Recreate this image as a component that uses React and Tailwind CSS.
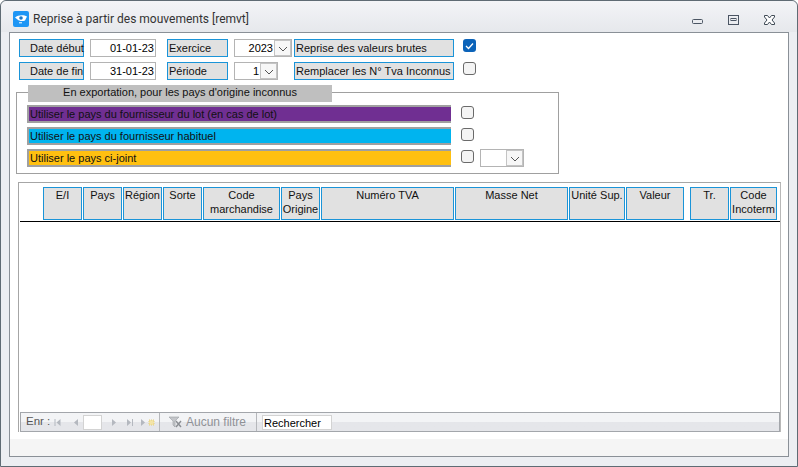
const font = { fontFamily: '"Liberation Sans", Arial, sans-serif' };

function Label({ className = "", children }) {
  return (
    <div className={"h-[18px] border border-[#1a94d8] bg-[#e1e1e1] text-[11px] leading-[16px] text-[#111] whitespace-nowrap " + className}>
      {children}
    </div>
  );
}

function Field({ className = "", children }) {
  return (
    <div className={"h-[18px] border border-[#b4b4b4] bg-white pr-[1px] text-right text-[11px] leading-[16px] text-black " + className}>
      {children}
    </div>
  );
}

function Arrow() {
  return (
    <div className="flex h-full w-[17px] shrink-0 items-center justify-center border border-[#c4c4c4] bg-[#f7f7f7]">
      <svg width="10" height="6" viewBox="0 0 10 6" className="mt-[2px]"><path d="M1 1l4 4 4-4" fill="none" stroke="#555" strokeWidth="1" /></svg>
    </div>
  );
}

function Combo({ className = "", value }) {
  return (
    <div className={"flex h-[18px] border border-[#b4b4b4] bg-white text-[11px] leading-[16px] text-black " + className}>
      <div className="flex-1 pr-[1px] text-right">{value}</div>
      <Arrow />
    </div>
  );
}

function Check({ checked, className = "" }) {
  return checked ? (
    <div className={"flex h-[13px] w-[13px] items-center justify-center rounded-[3px] bg-[#0b63b9] " + className}>
      <svg width="9" height="8" viewBox="0 0 9 8"><path d="M1 4l2.500 2.500L8 1.500" fill="none" stroke="#fff" strokeWidth="1.300" /></svg>
    </div>
  ) : (
    <div className={"h-[13px] w-[13px] rounded-[3px] border border-[#6a6a6a] bg-[#f4f4f4] " + className} />
  );
}

function ColorRow({ bg, children }) {
  return (
    <div className="h-[18px] w-[424px] shrink-0 border-t-2 border-l-2 border-b-2 border-[#a0a0a0]">
      <div className={"h-[14px] truncate pl-[1px] text-[11px] leading-[14px] text-[#111] " + bg}>{children}</div>
    </div>
  );
}

const columns = [
  { w: "w-[39px]", ml: "ml-0", t: "E/I" },
  { w: "w-[39px]", ml: "ml-[1px]", t: "Pays" },
  { w: "w-[39px]", ml: "ml-[1px]", t: "Région" },
  { w: "w-[39px]", ml: "ml-[1px]", t: "Sorte" },
  { w: "w-[77px]", ml: "ml-[1px]", t: "Code marchandise" },
  { w: "w-[39px]", ml: "ml-[1px]", t: "Pays Origine" },
  { w: "w-[133px]", ml: "ml-[1px]", t: "Numéro TVA" },
  { w: "w-[113px]", ml: "ml-[1px]", t: "Masse Net" },
  { w: "w-[56px]", ml: "ml-[1px]", t: "Unité Sup." },
  { w: "w-[58px]", ml: "ml-[1px]", t: "Valeur" },
  { w: "w-[39px]", ml: "ml-[6px]", t: "Tr." },
  { w: "w-[47px]", ml: "ml-[1px]", t: "Code Incoterm" },
];

function NavIcon({ d, className = "" }) {
  return (
    <svg width="8" height="9" viewBox="0 0 8 9" className={"shrink-0 " + className}><path d={d} fill="#b4b8bf" /></svg>
  );
}

export default function App() {
  return (
    <div style={font} className="h-[467px] w-[798px] overflow-hidden bg-white">
      <div className="flex h-[467px] w-[798px] flex-col rounded-t-[6px] border border-[#5f6b74] bg-[#eceef2] px-[8px] pb-[9px]">
        {/* title bar */}
        <div className="-mx-[8px] flex h-[31px] shrink-0 items-center rounded-t-[6px] bg-gradient-to-b from-[#f3f4f7] to-[#e6e8ec] px-[12px] pb-[1px]">
          <div className="mt-[6px] flex h-[16px] w-[16px] items-center justify-center rounded-[2px] bg-[#1e96f5]">
            <svg width="14" height="10" viewBox="0 0 14 10">
              <path d="M1 3.500C4 0.800 10 0.800 13 2.500L11 6.500C8 7.500 5 7 3.500 5.500z" fill="#fff" />
              <circle cx="7" cy="4" r="1.800" fill="#1b78c8" />
              <path d="M5 8.800h3" stroke="#fff" strokeWidth="1" />
            </svg>
          </div>
          <div style={{ fontFamily: 'Roboto, sans-serif' }} className="ml-[4px] mt-[6px] text-[12px] leading-[16px] text-[#333]">Reprise à partir des mouvements [remvt]</div>
          <div className="ml-auto mr-[10px] mt-[7px] flex items-start gap-[25px]">
            <svg width="11" height="5" viewBox="0 0 11 5" className="mt-[4px]"><rect x="0.500" y="0.500" width="10" height="4" rx="1" fill="none" stroke="#4b5563" /></svg>
            <svg width="11" height="10" viewBox="0 0 11 10"><rect x="0.500" y="0.500" width="10" height="9" fill="none" stroke="#4b5563" /><rect x="3" y="3.500" width="5" height="2" fill="none" stroke="#4b5563" /></svg>
            <svg width="11" height="10" viewBox="0 0 11 10"><path d="M0.500 0.500h3l2 2.500 2-2.500h3v1.500L8 5l2.500 3v1.500h-3l-2-2.500-2 2.500h-3V8L3 5 0.500 2z" fill="#fff" stroke="#3f4a55" /></svg>
          </div>
        </div>

        {/* content */}
        <div className="flex min-h-0 flex-1 flex-col border border-[#8a9097] bg-white">
          <div className="flex h-[406px] flex-col px-[9px] pt-[6px]">
            <div className="flex items-start">
              <Label className="w-[65px] pl-[10px]">Date début</Label>
              <Field className="ml-[6px] w-[66px]">01-01-23</Field>
              <Label className="ml-[11px] w-[61px] pl-[1px]">Exercice</Label>
              <Combo className="ml-[6px] w-[58px]" value="2023" />
              <Label className="ml-[2px] w-[160px] pl-[1px]">Reprise des valeurs brutes</Label>
              <Check checked className="ml-[9px]" />
            </div>
            <div className="mt-[5px] flex items-start">
              <Label className="w-[65px] pl-[10px]">Date de fin</Label>
              <Field className="ml-[6px] w-[66px]">31-01-23</Field>
              <Label className="ml-[11px] w-[61px] pl-[1px]">Période</Label>
              <Combo className="ml-[6px] w-[44px]" value="1" />
              <Label className="ml-[16px] w-[160px] pl-[1px]">Remplacer les N° Tva Inconnus</Label>
              <Check className="ml-[9px]" />
            </div>

            {/* group */}
            <div className="relative ml-[-3px] mt-[12px] h-[82px] w-[543px] shrink-0 border border-[#a0a0a0] pl-[10px] pt-[12px]">
              <div className="absolute left-[11px] top-[-8px] h-[17px] w-[304px] bg-[#bfbfbf] text-center text-[11px] leading-[15px] text-[#111]">
                En exportation, pour les pays d'origine inconnus
              </div>
              <div className="flex items-start">
                <ColorRow bg="bg-[#702f92]">Utiliser le pays du fournisseur du lot (en cas de lot)</ColorRow>
                <Check className="ml-[10px] mt-[1px]" />
              </div>
              <div className="mt-[4px] flex items-start">
                <ColorRow bg="bg-[#00b4ef]">Utiliser le pays du fournisseur habituel</ColorRow>
                <Check className="ml-[10px] mt-[1px]" />
              </div>
              <div className="mt-[4px] flex items-start">
                <ColorRow bg="bg-[#ffc010]">Utiliser le pays ci-joint</ColorRow>
                <Check className="ml-[10px] mt-[1px]" />
                <Combo className="ml-[6px] w-[44px]" value="" />
              </div>
            </div>

            {/* table */}
            <div className="ml-[-1px] mt-[8px] flex h-[250px] w-[763px] shrink-0 flex-col border-t border-l border-r border-t-[#a6a6a6] border-l-[#a6a6a6] border-r-[#b8b8b8]">
              <div className="flex h-[38px] shrink-0 pl-[24px] pt-[4px]">
                {columns.map((c) => (
                  <div key={c.t} className={"h-[33px] shrink-0 border border-[#1a94d8] bg-[#e1e1e1] text-center text-[11px] leading-[14px] text-[#111] " + c.w + " " + c.ml}>
                    {c.t}
                  </div>
                ))}
              </div>
              <div className="ml-[1px] h-[1px] shrink-0 bg-black" />
              <div className="flex-1" />
              <div className="ml-[1px] flex h-[20px] shrink-0 items-center border border-[#a3a6ab] bg-gradient-to-b from-[#f3f4f6] from-50% to-[#e5e6ea] to-50% text-[12px] text-[#555]">
                <span className="ml-[5px] w-[28px] shrink-0 text-[11.5px]">Enr :</span>
                <NavIcon d="M0.500 1h1v7h-1zM6.500 1v7L2.500 4.500z" />
                <NavIcon d="M6 1v7L2 4.500z" className="ml-[10px]" />
                <div className="ml-[3px] h-[15px] w-[19px] shrink-0 border border-[#d3d3d3] bg-white" />
                <NavIcon d="M2 1v7l4-3.500z" className="ml-[8px]" />
                <NavIcon d="M1 1v7l4-3.500zM6 1h1v7H6z" className="ml-[8px]" />
                <NavIcon d="M1 1v7l4-3.500z" className="ml-[6px]" />
                <svg width="7" height="7" viewBox="0 0 7 7" className="shrink-0"><path d="M1 1h5v5H1z" fill="#f3e4a8" stroke="#e5cf7a" strokeDasharray="1 1" /></svg>
                <div className="ml-[4px] h-full w-px shrink-0 bg-[#b5b7bb]" />
                <svg width="15" height="13" viewBox="0 0 15 13" className="ml-[8px] shrink-0"><path d="M1 1h10L7 5v6L5 9V5z" fill="#c4c6ca" stroke="#9a9da2" strokeWidth="0.600" /><path d="M8 5l5 6M13 5l-5 6" stroke="#8a8d92" strokeWidth="1.400" /></svg>
                <span className="ml-[3px] whitespace-nowrap text-[#8f9196]">Aucun filtre</span>
                <div className="ml-[10px] h-full w-px shrink-0 bg-[#b5b7bb]" />
                <div className="ml-[5px] h-[15px] w-[70px] shrink-0 border border-[#d3d3d3] bg-white pl-[1px] text-[11px] leading-[14px] text-black">Rechercher</div>
              </div>
            </div>
          </div>
          <div className="flex-1 bg-[#f5f5f5]" />
        </div>
      </div>
    </div>
  );
}
